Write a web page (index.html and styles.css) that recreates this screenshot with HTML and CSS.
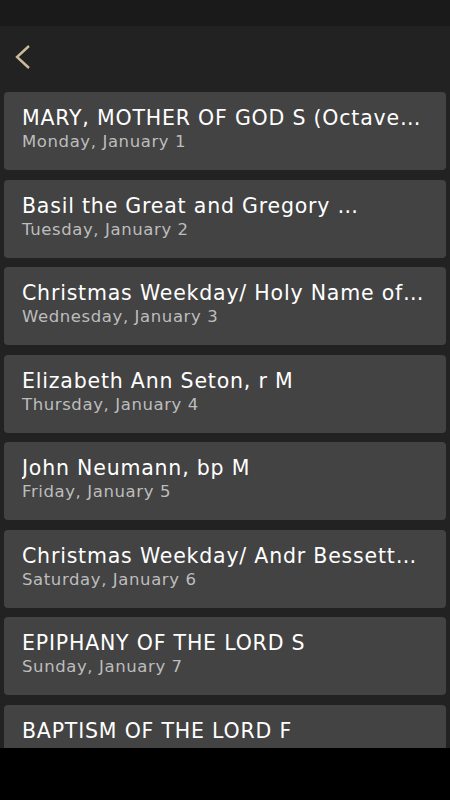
FILE: index.html
```html
<!DOCTYPE html>
<html lang="en">
<head>
    <meta charset="UTF-8">
    <meta name="viewport" content="width=device-width, initial-scale=1.0">
    <title>Calendar</title>
    <link rel="stylesheet" href="styles.css">
</head>
<body>
    <div class="status-bar"></div>

    <!-- Header -->
    <header class="top-bar">
        <svg class="back" width="22" height="28" viewBox="0 0 22 28">
            <polyline points="17,3 5,14 17,25" fill="none" stroke="#c9bb9c" stroke-width="2.4"/>
        </svg>
    </header>

    <!-- Feast list -->
    <main class="list">
        <div class="card">
            <div class="title">MARY, MOTHER OF GOD S (Octave…</div>
            <div class="date">Monday, January 1</div>
        </div>
        <div class="card">
            <div class="title">Basil the Great and Gregory …</div>
            <div class="date">Tuesday, January 2</div>
        </div>
        <div class="card">
            <div class="title">Christmas Weekday/ Holy Name of…</div>
            <div class="date">Wednesday, January 3</div>
        </div>
        <div class="card">
            <div class="title">Elizabeth Ann Seton, r M</div>
            <div class="date">Thursday, January 4</div>
        </div>
        <div class="card">
            <div class="title">John Neumann, bp M</div>
            <div class="date">Friday, January 5</div>
        </div>
        <div class="card">
            <div class="title">Christmas Weekday/ Andr Bessett…</div>
            <div class="date">Saturday, January 6</div>
        </div>
        <div class="card">
            <div class="title">EPIPHANY OF THE LORD S</div>
            <div class="date">Sunday, January 7</div>
        </div>
        <div class="card">
            <div class="title">BAPTISM OF THE LORD F</div>
        </div>
    </main>

    <div class="nav-bar"></div>
</body>
</html>
```

FILE: styles.css
```css
body {
    margin: 0;
    padding: 0;
    height: 800px;
    background-color: #222222;
    font-family: "DejaVu Sans", "Open Sans", sans-serif;
    display: flex;
    flex-direction: column;
    overflow: hidden;
}
.status-bar { height: 26px; background: #1a1a1a; flex-shrink: 0; }
.top-bar {
    height: 62px;
    flex-shrink: 0;
    display: flex;
    align-items: center;
    padding-left: 12px;
    box-sizing: border-box;
}
.back { display: block; }
.list {
    flex: 1;
    overflow: hidden;
    padding: 4px 4px 0 4px;
}
.card {
    height: 78px;
    margin-bottom: 9.5px;
    background: #434343;
    border-radius: 4px;
    padding: 12px 16px 0 18px;
    box-sizing: border-box;
}
.title {
    color: #ffffff;
    font-size: 20.5px;
    letter-spacing: 0.8px;
    line-height: 28px;
    white-space: nowrap;
    overflow: hidden;
}
.date {
    color: #bdbdbd;
    font-size: 16.5px;
    letter-spacing: 0.6px;
    line-height: 20px;
}
.nav-bar { height: 52px; background: #000; flex-shrink: 0; }
```
